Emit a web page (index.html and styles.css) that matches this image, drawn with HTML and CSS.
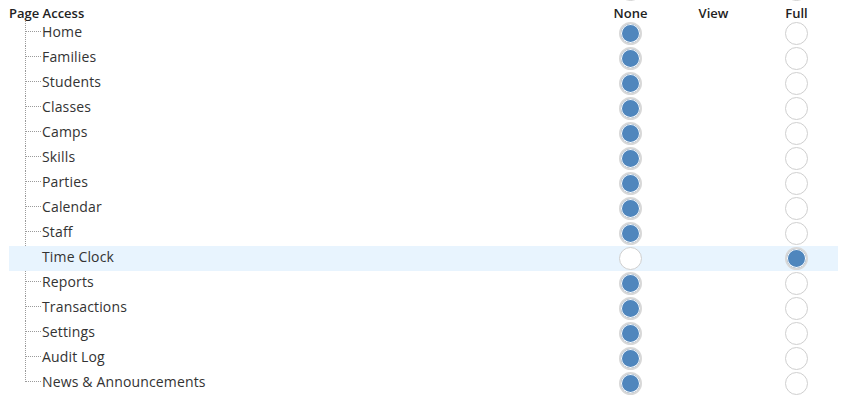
FILE: index.html
```html
<!DOCTYPE html>
<html lang="en">
<head>
<meta charset="utf-8">
<title>Page Access</title>
<link rel="stylesheet" href="styles.css">
</head>
<body>
<div class="perm">
  <div class="row ghost" aria-hidden="true">
    <div class="label"></div>
    <div class="cell"><span class="radio"></span></div>
    <div class="cell"></div>
    <div class="cell"><span class="radio"></span></div>
  </div>
  <div class="row head">
    <div class="label">Page Access</div>
    <div class="cell">None</div>
    <div class="cell">View</div>
    <div class="cell">Full</div>
  </div>
  <div class="tree">
    <div class="row item"><div class="label">Home</div><div class="cell"><span class="radio on"></span></div><div class="cell"></div><div class="cell"><span class="radio"></span></div></div>
    <div class="row item"><div class="label">Families</div><div class="cell"><span class="radio on"></span></div><div class="cell"></div><div class="cell"><span class="radio"></span></div></div>
    <div class="row item"><div class="label">Students</div><div class="cell"><span class="radio on"></span></div><div class="cell"></div><div class="cell"><span class="radio"></span></div></div>
    <div class="row item"><div class="label">Classes</div><div class="cell"><span class="radio on"></span></div><div class="cell"></div><div class="cell"><span class="radio"></span></div></div>
    <div class="row item"><div class="label">Camps</div><div class="cell"><span class="radio on"></span></div><div class="cell"></div><div class="cell"><span class="radio"></span></div></div>
    <div class="row item"><div class="label">Skills</div><div class="cell"><span class="radio on"></span></div><div class="cell"></div><div class="cell"><span class="radio"></span></div></div>
    <div class="row item"><div class="label">Parties</div><div class="cell"><span class="radio on"></span></div><div class="cell"></div><div class="cell"><span class="radio"></span></div></div>
    <div class="row item"><div class="label">Calendar</div><div class="cell"><span class="radio on"></span></div><div class="cell"></div><div class="cell"><span class="radio"></span></div></div>
    <div class="row item"><div class="label">Staff</div><div class="cell"><span class="radio on"></span></div><div class="cell"></div><div class="cell"><span class="radio"></span></div></div>
    <div class="row item active"><div class="label">Time Clock</div><div class="cell"><span class="radio"></span></div><div class="cell"></div><div class="cell"><span class="radio on"></span></div></div>
    <div class="row item"><div class="label">Reports</div><div class="cell"><span class="radio on"></span></div><div class="cell"></div><div class="cell"><span class="radio"></span></div></div>
    <div class="row item"><div class="label">Transactions</div><div class="cell"><span class="radio on"></span></div><div class="cell"></div><div class="cell"><span class="radio"></span></div></div>
    <div class="row item"><div class="label">Settings</div><div class="cell"><span class="radio on"></span></div><div class="cell"></div><div class="cell"><span class="radio"></span></div></div>
    <div class="row item"><div class="label">Audit Log</div><div class="cell"><span class="radio on"></span></div><div class="cell"></div><div class="cell"><span class="radio"></span></div></div>
    <div class="row item last"><div class="label">News &amp; Announcements</div><div class="cell"><span class="radio on"></span></div><div class="cell"></div><div class="cell"><span class="radio"></span></div></div>
  </div>
</div>
</body>
</html>
```
FILE: styles.css
```css
html, body {
  margin: 0;
  padding: 0;
  background: #fff;
  overflow: hidden;
}
body {
  font-family: "Open Sans", "Noto Sans", sans-serif;
  color: #333;
}
.perm {
  width: 829px;
  margin-left: 9px;
}
.row {
  display: grid;
  grid-template-columns: 1fr 83px 83px 83px;
  height: 25px;
}
.ghost {
  margin-top: -23px;
}
.cell {
  display: flex;
  align-items: center;
  justify-content: center;
}
.head {
  height: 19px;
  font-size: 13px;
  font-weight: 600;
  color: #222;
}
.head .label,
.head .cell {
  padding-top: 3px;
  line-height: 16px;
  align-items: flex-start;
}
.item .label {
  position: relative;
  padding-left: 33px;
  font-size: 14px;
  letter-spacing: 0.15px;
  line-height: 21px;
  white-space: nowrap;
}
.item .label::before {
  content: "";
  position: absolute;
  left: 16px;
  top: 0;
  bottom: 0;
  border-left: 1px dotted #9a9a9a;
}
.item.last .label::before {
  bottom: auto;
  height: 11px;
}
.item .label::after {
  content: "";
  position: absolute;
  left: 17px;
  top: 10px;
  width: 15px;
  border-top: 1px dotted #9a9a9a;
}
.item.active {
  background: #e8f4fe;
}
.item.active .label::before,
.item.active .label::after {
  display: none;
}
.radio {
  box-sizing: border-box;
  width: 23px;
  height: 23px;
  border-radius: 50%;
  border: 1px solid #cfcfcf;
  background: #fff;
}
.radio.on {
  border: 2px solid #d8d8d8;
  background: #4f86bd;
  box-shadow: inset 0 0 0 1px #fff;
}
```
